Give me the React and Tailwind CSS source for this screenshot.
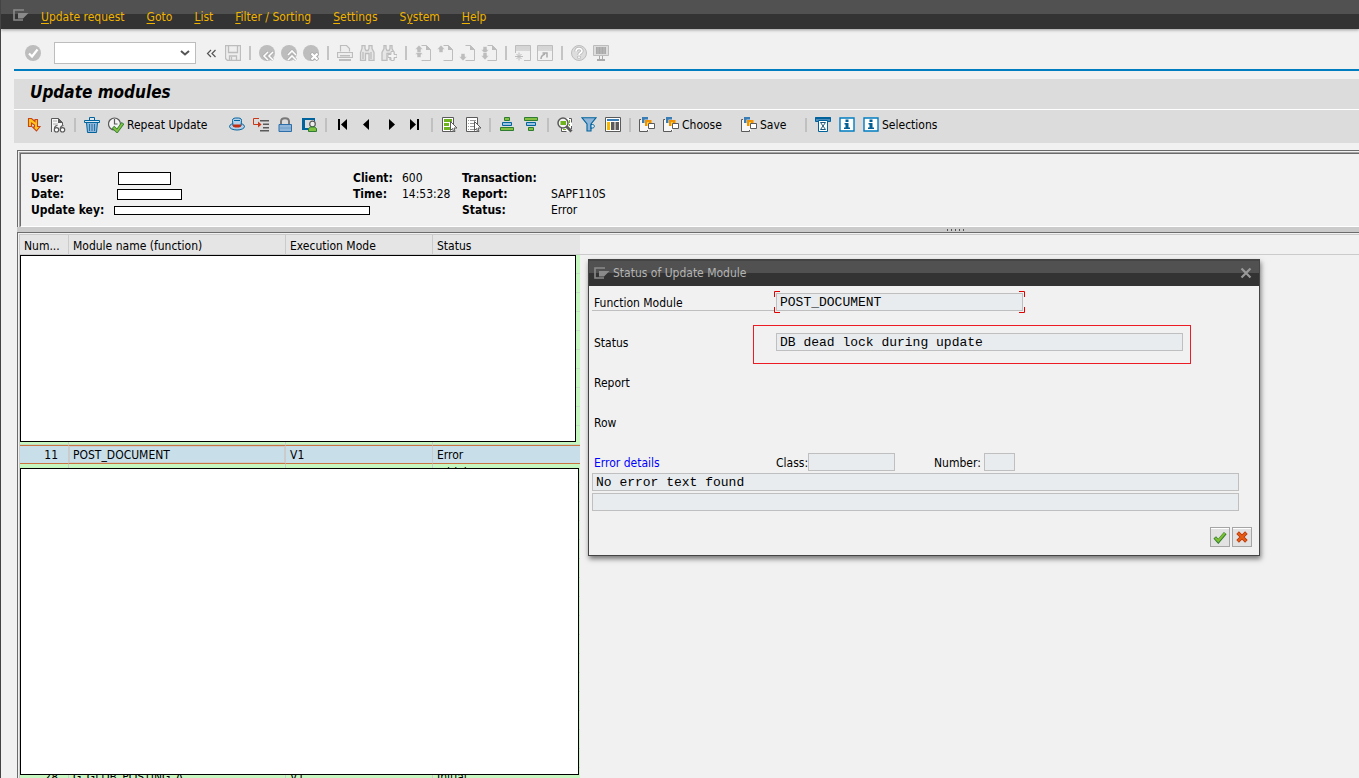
import { useState } from 'react'
import clsx from 'clsx'

const MENU = [
  ['', 'U', 'pdate request'],
  ['', 'G', 'oto'],
  ['', 'L', 'ist'],
  ['', 'F', 'ilter / Sorting'],
  ['', 'S', 'ettings'],
  ['S', 'y', 'stem'],
  ['', 'H', 'elp'],
]

const G = '#bdbdbd'
const DARK = '#5a5a5a'
const BLUE = '#00639c'
const LIGHT_BLUE = '#8fb5d9'
const GREEN = '#6fb21f'
const DARK_GREEN = '#2f7d32'

const page = (
  <>
    <path d="M6.500.5h5l4 4v11h-9" fill="none" stroke={G} />
    <path d="M11 0v5h5z" fill={G} />
  </>
)
const upArrow = (y) => <path d={`M4 ${y}l4 4.500h-2v3h-4v-3h-2z`} fill={G} stroke="#f1f1f1" strokeWidth=".6" />
const downArrow = (y) => <path d={`M4 ${y}l4-4.500h-2v-3h-4v3h-2z`} fill={G} stroke="#f1f1f1" strokeWidth=".6" />

const ICONS = {
  enter: (
    <>
      <circle cx="8" cy="8" r="8" fill={G} />
      <path d="M4 8.500l3 3 5.500-7" fill="none" stroke="#fff" strokeWidth="2.200" />
    </>
  ),
  collapse: <path d="M8 5l-3.500 3.500L8 12M12.500 5L9 8.500l3.500 3.500" fill="none" stroke="#555" strokeWidth="1.200" />,
  disk: (
    <>
      <path d="M.5.5h15v15H2.500l-2-2z" fill="#eee" stroke={G} strokeWidth="1.300" />
      <path d="M3.500.5v7h9v-7M4.500 15v-4h7v4M6.500 12v3" fill="none" stroke={G} strokeWidth="1.300" />
    </>
  ),
  back: (
    <>
      <circle cx="8" cy="8" r="8" fill={G} />
      <path d="M9 7l-4 4 4 4M14 7l-4 4 4 4" fill="none" stroke="#aaa" strokeWidth="2.800" />
      <path d="M9 7l-4 4 4 4M14 7l-4 4 4 4" fill="none" stroke="#fff" strokeWidth="1.600" />
    </>
  ),
  exit: (
    <>
      <circle cx="8" cy="8" r="8" fill={G} />
      <path d="M7 10l4-4 4 4M7 15l4-4 4 4" fill="none" stroke="#aaa" strokeWidth="2.800" />
      <path d="M7 10l4-4 4 4M7 15l4-4 4 4" fill="none" stroke="#fff" strokeWidth="1.600" />
    </>
  ),
  cancel: (
    <>
      <circle cx="8" cy="8" r="8" fill={G} />
      <path d="M8 8l7 7M15 8l-7 7" stroke="#aaa" strokeWidth="3.800" />
      <path d="M8.500 8.500l6 6M14.500 8.500l-6 6" stroke="#fff" strokeWidth="2.200" />
    </>
  ),
  print: (
    <>
      <path d="M3.500 6.500v-6h6l3 3v3" fill="#eee" stroke={G} strokeWidth="1.200" />
      <path d="M.5 7.500h15v5H.5z" fill="#eee" stroke={G} strokeWidth="1.200" />
      <path d="M3 10h10v1.500H3zM2 14h12v2H2z" fill={G} />
    </>
  ),
  find: (
    <path d="M3 .5h3v3l1 2h2l1-2v-3h3v3l2 4v8H10v-7H6.500v7H1.500v-8l1.500-4zM4 7v7M12 7v7" fill="#e6e6e6" stroke={G} strokeWidth="1.300" />
  ),
  findNext: (
    <>
      <path d="M3 .5h2v3l1 2h2l1-2v-3h2v3l2 4v7H9v-6H6v7H1v-8l2-4z" fill="#e6e6e6" stroke={G} strokeWidth="1.300" />
      <path d="M10 6.500h3v3h3v3h-3v3h-3v-3H7v-3h3z" fill="#f4f4f4" stroke={G} />
    </>
  ),
  firstPage: <>{page}{upArrow(5)}{upArrow(0)}</>,
  prevPage: <>{page}{upArrow(0)}</>,
  nextPage: <>{page}{downArrow(16)}</>,
  lastPage: <>{page}{downArrow(9)}{downArrow(15)}</>,
  newSession: (
    <>
      <path d="M.5 8V.5h15v15H9" fill="none" stroke={G} />
      <path d="M1 1h14v3H1z" fill="#d5d5d5" />
      <path d="M.5 5h15M4 7.500v8M0 11.500h8M1.500 9l5 5M6.500 9l-5 5" stroke={G} />
    </>
  ),
  shortcut: (
    <>
      <path d="M.5.5h15v15H.5z" fill="none" stroke={G} />
      <path d="M1 1h14v3H1z" fill="#d5d5d5" />
      <path d="M.5 5h15" stroke={G} />
      <path d="M4 14c0-3 1-4 4-5M5.500 8H10v4.500" fill="none" stroke="#aaa" strokeWidth="1.500" />
    </>
  ),
  help: (
    <>
      <circle cx="8" cy="8" r="7.500" fill="#ddd" stroke={G} />
      <path d="M5 6.500c0-4 6-4 6-.5 0 2-3 2-3 4M8 11v2.500" fill="none" stroke={G} strokeWidth="3.400" />
      <path d="M5 6.500c0-4 6-4 6-.5 0 2-3 2-3 4M8 11.500v1.500" fill="none" stroke="#fff" strokeWidth="1.600" />
    </>
  ),
  monitor: (
    <>
      <path d="M.5.5h15v10H.5z" fill="#ddd" stroke={G} />
      <path d="M3 2h10v7H3z" fill="#aaa" />
      <path d="M4.500 2h1v7h-1zM7.500 2h1v7h-1zM10.500 2h1v7h-1z" fill="#bbb" />
      <path d="M6 11h1v3h2v-3h1v3h2v2H4v-2h2z" fill="#aaa" />
    </>
  ),
  lightning: (
    <path d="M2.500 1.500h3L9 4.500V2.500h2.500v7h2.500L10.500 14 6.500 10h2V8L5.500 6v3.500h-3z" fill="#ffc61a" stroke="#c8451b" strokeWidth="1.100" />
  ),
  glasses: (
    <>
      <path d="M1.500 15V1.500h7l4 4V8" fill="#f7f7f7" stroke={DARK} />
      <path d="M8 1v5h5z" fill={DARK} />
      <path d="M3 4h4M3 7h5" stroke="#aaa" />
      <g fill="#fff" stroke={DARK} strokeWidth="1.200">
        <path d="M4.500 12c0-3 1-3.500 3-3.500M10.500 12c0-3 1-3.500 3-3.500" fill="none" />
        <circle cx="6.500" cy="12.800" r="2.200" />
        <circle cx="12.500" cy="12.800" r="2.200" />
      </g>
    </>
  ),
  trash: (
    <>
      <path d="M2.500 5.500h11l-1 10h-9z" fill={LIGHT_BLUE} stroke={BLUE} />
      <path d="M.5 3.500h15v2H.5zM5.500 3.500v-3h5v3" fill="#dce9f3" stroke={BLUE} />
      <path d="M5.500 7v7M8 7v7M10.500 7v7" stroke={BLUE} strokeWidth=".8" />
    </>
  ),
  clock: (
    <>
      <circle cx="6.500" cy="7" r="6" fill="#f4f4f4" stroke={DARK} strokeWidth="1.200" />
      <path d="M6.500 2v5h3" fill="none" stroke={DARK} strokeWidth="1.200" />
      <path d="M5 10l4 4 6-8" fill="none" stroke={DARK_GREEN} strokeWidth="3.400" />
      <path d="M5.500 10.500l3.500 3.500 5.500-7.500" fill="none" stroke="#84c341" strokeWidth="1.800" />
    </>
  ),
  hat: (
    <>
      <ellipse cx="8" cy="9.500" rx="7.500" ry="3.500" fill="#b5d0e8" stroke={BLUE} />
      <path d="M4 9L3.500 3.500c0-2.500 2-2.500 4.500-2.500s4.500 0 4.500 2.500L12 9z" fill="#b5d0e8" stroke={BLUE} />
      <path d="M5 3.500h6" stroke={BLUE} />
      <path d="M4 7.500h8v2l-2 1H6l-2-1z" fill="#c22d12" />
    </>
  ),
  indent: (
    <>
      <path d="M6 1.500H.5v6H6" fill="none" stroke="#c8381a" />
      <path d="M5 4.500L8.500 7.500 5 10.500z" fill="#c8381a" />
      <path d="M7 3h9v1.500H7zM10 6.500h6V8h-6zM10 10h6v1.500h-6zM7 13h9v1.500H7z" fill={DARK} />
    </>
  ),
  lock: (
    <>
      <path d="M4 8V4.500C4 0 12 0 12 4.500V8" fill="none" stroke="#777" strokeWidth="2" />
      <path d="M2 7.500h12.500v7H2z" fill={LIGHT_BLUE} stroke="#2d6fa8" />
      <path d="M2.500 11h11.500" stroke="#6c9dc9" />
    </>
  ),
  owner: (
    <>
      <path d="M14 1v3h-1V3H4v8h4v2H1V1z" fill={BLUE} />
      <circle cx="11.500" cy="7" r="2.800" fill="#eee" stroke={DARK} strokeWidth="1.200" />
      <path d="M7.500 14.500v-3l2-1.500h4l2 1.500v3z" fill="#7fc241" stroke={DARK_GREEN} />
    </>
  ),
  first: <path d="M3 2h2v11H3zM12 2v11L6 7.500z" fill="#000" />,
  prev: <path d="M10 2v11L4 7.500z" fill="#000" />,
  next: <path d="M6 2v11l6-5.500z" fill="#000" />,
  last: <path d="M3 2v11l6-5.500zM10 2h2v11h-2z" fill="#000" />,
  selectAll: (
    <>
      <path d="M1.500.5h11v14h-11z" fill="#fff" stroke={DARK} />
      <path d="M3 2h8v3H3zM3 6h5v3H3zM3 10h6v3H3z" fill={GREEN} />
      <path d="M9.500 4.500v9l2-2 1 3h1.500l-1-3.500h3z" fill="#fff" stroke={DARK} />
    </>
  ),
  deselectAll: (
    <>
      <path d="M1.500.5h11v14h-11z" fill="#fff" stroke={DARK} />
      <path d="M3 3.500h1M5 3.500h6M3 6.500h1M5 6.500h4M3 9.500h1M5 9.500h4M3 12.500h1M5 12.500h4" stroke="#999" />
      <path d="M9.500 4.500v9l2-2 1 3h1.500l-1-3.500h3z" fill="#fff" stroke={DARK} />
    </>
  ),
  sortAsc: (
    <>
      <path d="M5.500.5h5v3h-5z" fill="#84bf41" stroke={DARK_GREEN} />
      <path d="M3.500 5.500h9v3h-9z" fill="#9cc3e0" stroke={BLUE} />
      <path d="M1.500 10.500h13v3h-13z" fill="#84bf41" stroke={DARK_GREEN} />
    </>
  ),
  sortDesc: (
    <>
      <path d="M1.500.5h13v3h-13z" fill="#84bf41" stroke={DARK_GREEN} />
      <path d="M3.500 5.500h9v3h-9z" fill="#9cc3e0" stroke={BLUE} />
      <path d="M5.500 10.500h5v3h-5z" fill="#84bf41" stroke={DARK_GREEN} />
    </>
  ),
  search: (
    <>
      <path d="M9 1h6v13.500H4V10" fill="#fff" />
      <path d="M12 1.500h2.500v4M4.500 11v3.500h5M14.500 9v3" fill="none" stroke={DARK} />
      <path d="M12 3h1v3h-1zM12 7h1v2h-1zM6 12h3v1H6z" fill={GREEN} />
      <circle cx="6" cy="6" r="5" fill="#f4f4f4" stroke={DARK} strokeWidth="1.500" />
      <path d="M3.500 4H9v4H3.500z" fill={GREEN} />
      <path d="M9.500 9.500l5 5" stroke={DARK} strokeWidth="3" />
    </>
  ),
  filter: (
    <>
      <path d="M1 .8h14L10 7v7H6V7z" fill={LIGHT_BLUE} stroke={BLUE} strokeWidth="1.100" />
      <path d="M10 12V7.500h1.500c2.500 0 2.500 3.500 0 3.500H10" fill="#dce9f3" stroke={BLUE} />
    </>
  ),
  layout: (
    <>
      <path d="M.5.5h15v14H.5z" fill="#fff" stroke={DARK} />
      <path d="M2 2h12v2H2z" fill="#3a7db5" />
      <path d="M2 5h3v8H2z" fill="#f9b800" />
      <path d="M6 5h3.500v8H6zM10.500 5H14v8h-3.500z" fill={DARK} />
    </>
  ),
  stack: (
    <>
      <path d="M1 3h9v11H1z" fill="#f7f7f7" />
      <path d="M2 2.500H.5v12h8v-1.500" fill="none" stroke={DARK} />
      <path d="M3 0h6v2.500H5.500V6H3z" fill="#3a7db5" />
      <path d="M6 3h6.500v3H9.500v3H6z" fill="#f39200" />
      <path d="M8 5h2v1H9v3H8z" fill="#ffd14d" />
      <path d="M9.500 6.500h6v5h-6z" fill="#fff" stroke={DARK} />
    </>
  ),
  hourglass: (
    <>
      <path d="M.5.5h15v4h-15z" fill="#4d8dbb" stroke={BLUE} />
      <path d="M3.500 3.500h9v11h-9z" fill="#fff" stroke={BLUE} />
      <path d="M5.500 5.500h5l-5 7h5z" fill="none" stroke="#1f5679" />
      <path d="M.5 1h15" stroke={BLUE} strokeWidth="2" />
    </>
  ),
  info: (
    <>
      <path d="M1 1h14v13H1z" fill="#fff" stroke="#007cc0" strokeWidth="1.400" />
      <path d="M6.500 2.500h3V5h-3zM5.500 6h4v4.500H11V12H5v-1.500h1.500v-3h-1z" fill="#005f94" />
    </>
  ),
  check: (
    <>
      <path d="M2 8.500L6 13l8-9.500" fill="none" stroke={DARK_GREEN} strokeWidth="4" />
      <path d="M2.500 9L6 12.500l7.500-9" fill="none" stroke="#7fc031" strokeWidth="2.400" />
    </>
  ),
  cross: (
    <>
      <path d="M3 3l10 10M13 3L3 13" fill="none" stroke="#b5370d" strokeWidth="4.200" />
      <path d="M3.500 3.500l9 9M12.500 3.500l-9 9" fill="none" stroke="#e65c12" strokeWidth="2.600" />
    </>
  ),
}

// null = separator
const STANDARD_BAR = [
  'collapse', 'disk', null,
  'back', 'exit', 'cancel', null,
  'print', 'find', 'findNext', null,
  'firstPage', 'prevPage', 'nextPage', 'lastPage', null,
  'newSession', 'shortcut', null,
  'help', 'monitor',
]

const APP_BAR = [
  { icon: 'lightning' }, { icon: 'glasses' }, null,
  { icon: 'trash' }, { icon: 'clock', text: 'Repeat Update', cls: 'w-[121px]' },
  { icon: 'hat' }, { icon: 'indent' }, { icon: 'lock' }, { icon: 'owner' }, null,
  { icon: 'first' }, { icon: 'prev' }, { icon: 'next' }, { icon: 'last' }, null,
  { icon: 'selectAll' }, { icon: 'deselectAll' }, null,
  { icon: 'sortAsc' }, { icon: 'sortDesc' }, null,
  { icon: 'search' }, { icon: 'filter' }, { icon: 'layout' }, null,
  { icon: 'stack' }, { icon: 'stack', text: 'Choose', cls: 'w-[78px]' },
  { icon: 'stack', text: 'Save', cls: 'w-16' }, null,
  { icon: 'hourglass' }, { icon: 'info' }, { icon: 'info', text: 'Selections', cls: 'w-[90px]' },
]

const ROWS = Array.from({ length: 29 }, (_, i) => {
  const num = i + 1
  if (num === 11) return { num, name: 'POST_DOCUMENT', mode: 'V1', status: 'Error' }
  if (num === 12 || num === 28) return { num, name: 'G_GLDB_POSTING_A', mode: 'V1', status: 'Initial' }
  return { num: '', name: '', mode: '', status: '' }
})

const fieldCls =
  'h-[18px] border border-[#bfbfbf] bg-[#e8ecef] px-[3px] font-["Liberation_Mono",monospace] text-[13px] leading-4 text-black outline-none'

function Icon({ name }) {
  return <svg viewBox="0 0 16 16" className="size-4 shrink-0">{ICONS[name]}</svg>
}

function WindowMark() {
  return (
    <svg viewBox="0 0 16 12" className="h-3 w-4 shrink-0">
      <path d="M11 1H1v10h9" fill="none" stroke="#8a8a8a" strokeWidth="1.600" />
      <path d="M5 4h10.500L10 9.500H5z" fill="#8a8a8a" />
    </svg>
  )
}

function MenuBar() {
  return (
    <nav className="flex h-[29px] items-center bg-linear-to-b from-[#515151] from-48% to-[#333] to-48% pl-3 pt-1 text-[#f0b400] shadow-[0_1px_3px_#999]">
      <span className="mb-1 mr-3"><WindowMark /></span>
      <div className="flex gap-[22px]">
        {MENU.map(([pre, key, rest]) => (
          <button key={pre + key + rest} type="button" className="leading-4">
            {pre}<span className="underline underline-offset-2">{key}</span>{rest}
          </button>
        ))}
      </div>
    </nav>
  )
}

function StandardBar() {
  const [command, setCommand] = useState('')
  return (
    <div className="ml-[13px] flex h-[42px] items-center border-b-2 border-[#007cc0] pl-2 pt-2">
      <button type="button" aria-label="Enter" className="flex w-[22px] justify-center"><Icon name="enter" /></button>
      <div className="relative ml-[10px] mr-1">
        <select
          aria-label="Command" value={command} onChange={(e) => setCommand(e.target.value)}
          className="block h-[22px] w-[142px] appearance-none border border-[#bdbdbd] bg-white px-1"
        >
          <option value="" />
        </select>
        <svg viewBox="0 0 10 6" className="pointer-events-none absolute right-[6px] top-2 h-[6px] w-[10px]">
          <path d="M1 1l4 3.500L9 1" fill="none" stroke="#555" strokeWidth="2" />
        </svg>
      </div>
      {STANDARD_BAR.map((name, i) =>
        name ? (
          <button key={i} type="button" aria-label={name} className="flex w-[22px] justify-center"><Icon name={name} /></button>
        ) : (
          <span key={i} className="flex w-3 justify-center"><span className="h-[14px] w-[2px] bg-[#c4c4c4]" /></span>
        )
      )}
    </div>
  )
}

function AppBar() {
  return (
    <div className="ml-[13px] flex h-[34px] items-center border-t border-white bg-[#dcdcdc] pb-1 pl-2">
      {APP_BAR.map((item, i) =>
        item ? (
          <button key={i} type="button" aria-label={item.text ?? item.icon}
            className={clsx('flex shrink-0 items-center gap-[3px] whitespace-nowrap pl-1', item.cls ?? 'w-6')}>
            <Icon name={item.icon} />
            {item.text}
          </button>
        ) : (
          <span key={i} className="flex w-[10px] shrink-0 justify-center"><span className="h-[14px] w-[2px] bg-[#c0c0c0]" /></span>
        )
      )}
    </div>
  )
}

function UpdateHeader() {
  return (
    <section className="ml-4 mt-[7px] border-l border-t border-[#6b6b6b] pl-px pt-px">
      <div className="border-l border-t border-[#a5a5a5]">
        <div className="grid h-[74px] grid-cols-[322px_49px_60px_89px_1fr] content-start border-b border-l border-t border-b-white border-l-[#6b6b6b] border-t-[#6b6b6b] pl-[10px] pt-4 leading-4">
          <div className="flex items-center">
            <b className="w-[83px]">User:</b>
            <span className="ml-1 h-[13px] w-[53px] border border-black bg-white" />
          </div>
          <b>Client:</b><span>600</span><b>Transaction:</b><span />
          <div className="flex items-center">
            <b className="w-[83px]">Date:</b>
            <span className="ml-[3px] h-[11px] w-[65px] border border-black bg-white" />
          </div>
          <b>Time:</b><span>14:53:28</span><b>Report:</b><span>SAPF110S</span>
          <div className="flex items-center">
            <b className="w-[83px] shrink-0 whitespace-nowrap">Update key:</b>
            <span className="h-[9px] w-[256px] shrink-0 border border-black bg-white" />
          </div>
          <span /><span /><b>Status:</b><span>Error</span>
        </div>
      </div>
    </section>
  )
}

function ModuleTable() {
  return (
    <section className="ml-4 flex min-h-0 flex-1 border-l border-t border-[#6b6b6b] pl-px pt-px">
      <div className="relative flex-1 overflow-hidden border-l border-t border-[#cbcbcb]">
        <div className="absolute inset-x-0 top-[19px] h-px bg-[#cbcbcb]" />
        <table className="relative w-[560px] table-fixed border-separate border-spacing-0">
          <colgroup>
            <col className="w-[49px]" /><col className="w-[217px]" /><col className="w-[147px]" /><col className="w-[147px]" />
          </colgroup>
          <thead>
            <tr className="h-5 bg-[#e5e5e5] text-left">
              {['Num...', 'Module name (function)', 'Execution Mode', 'Status'].map((h, i) => (
                <th key={h} scope="col"
                  className={clsx('whitespace-nowrap border-b border-[#cbcbcb] p-0 pl-1 pt-[2px] font-normal leading-4', i < 3 && 'border-r')}>
                  {h}
                </th>
              ))}
            </tr>
          </thead>
          <tbody>
            {ROWS.map((row, i) => {
              const selected = row.num === 11
              return (
                <tr key={i} className={clsx('h-[19px]', selected ? 'bg-[#c8dfea]' : 'bg-[#c6f7c1]')}>
                  {[row.num, row.name, row.mode, row.status].map((value, c) => (
                    <td key={c}
                      className={clsx(
                        'whitespace-nowrap border-b p-0 leading-4',
                        selected ? 'border-t border-y-[#c87340]' : 'border-b-[#c4dcc2]',
                        c < 3 && 'border-r border-r-[#cbcbcb]',
                        c === 0 ? 'pr-[10px] text-right' : 'pl-1',
                        selected && c === 1 && 'shadow-[inset_0_0_0_1px_#ccc]'
                      )}>
                      {value}
                    </td>
                  ))}
                </tr>
              )
            })}
          </tbody>
        </table>
        {/* blanked out rows */}
        <div className="absolute left-0 top-5 h-[187px] w-[556px] border border-black bg-white" />
        <div className="absolute left-0 top-[233px] h-[307px] w-[559px] border border-black bg-white" />
      </div>
    </section>
  )
}

function StatusDialog() {
  return (
    <div role="dialog" aria-labelledby="dialog-title"
      className="absolute left-[587px] top-[259px] w-[672px] border-x border-b border-t-2 border-[#444] bg-[#f1f1f1] shadow-[1px_3px_5px_#777]">
      <header className="flex h-[25px] items-center justify-between bg-linear-to-b from-[#515151] from-48% to-[#333] to-48% pb-[2px] pl-[5px] pr-[7px] text-[#b4b4b4]">
        <div className="flex items-center gap-[3px]">
          <WindowMark />
          <h2 id="dialog-title" className="leading-4">Status of Update Module</h2>
        </div>
        <button type="button" aria-label="Close">
          <svg viewBox="0 0 12 12" className="size-3"><path d="M1.500 1.500l9 9M10.500 1.500l-9 9" stroke="#999" strokeWidth="2.200" /></svg>
        </button>
      </header>
      <form className="flex flex-col gap-[2px] pb-2 pl-[3px] pr-[7px] pt-[7px] leading-4" onSubmit={(e) => e.preventDefault()}>
        <div className="flex">
          <label htmlFor="fm" className="mr-[2px] h-[18px] w-[182px] border-b border-[#bfbfbf] pl-[2px] pt-[2px]">Function Module</label>
          <div className="relative">
            <input id="fm" readOnly value="POST_DOCUMENT" className={clsx(fieldCls, 'block w-[247px]')} />
            <svg viewBox="0 0 251 22" className="pointer-events-none absolute -left-[2px] -top-[2px] h-[22px] w-[251px]">
              <path d="M6 .5H.5V6M.5 16v5.500H6M245 .5h5.500V6M250.500 16v5.500H245" fill="none" stroke="#e00000" />
            </svg>
          </div>
        </div>
        <div className="mt-5 flex">
          <label htmlFor="st" className="w-[184px] pl-[2px] pt-[2px]">Status</label>
          <div className="relative">
            <input id="st" readOnly value="DB dead lock during update" className={clsx(fieldCls, 'block w-[407px]')} />
            <div className="pointer-events-none absolute -left-[23px] -top-2 h-[39px] w-[438px] border border-[#ed1c24]" />
          </div>
        </div>
        <p className="mt-5 h-[18px] pl-[2px] pt-[2px]">Report</p>
        <p className="mt-5 h-[18px] pl-[2px] pt-[2px]">Row</p>
        <div className="mt-5 flex h-[18px]">
          <span className="w-[184px] pl-[2px] pt-[2px] text-[#0000ff]">Error details</span>
          <label htmlFor="cls" className="w-8 pt-[2px]">Class:</label>
          <input id="cls" readOnly value="" className={clsx(fieldCls, 'w-[87px]')} />
          <label htmlFor="nr" className="ml-[39px] w-[50px] pt-[2px]">Number:</label>
          <input id="nr" readOnly value="" className={clsx(fieldCls, 'w-[31px]')} />
        </div>
        <input aria-label="Error text" readOnly value="No error text found" className={clsx(fieldCls, 'w-[647px]')} />
        <input aria-label="Error text, line 2" readOnly value="" className={clsx(fieldCls, 'w-[647px]')} />
        <div className="mt-[14px] flex justify-end gap-[2px]">
          {['check', 'cross'].map((name) => (
            <button key={name} type="button" aria-label={name}
              className="flex size-5 items-center justify-center border border-[#a5a5a5] bg-[#e2e2e2] shadow-[inset_0_1px_0_#fff]">
              <svg viewBox="0 0 16 16" className="size-[14px]">{ICONS[name]}</svg>
            </button>
          ))}
        </div>
      </form>
    </div>
  )
}

export default function App() {
  return (
    <main className='relative flex h-screen flex-col overflow-hidden border-l border-[#444] bg-[#f1f1f1] font-["DejaVu_Sans_Condensed","DejaVu_Sans",sans-serif] text-[12px] text-black'>
      <MenuBar />
      <StandardBar />
      <h1 className="ml-[13px] mt-2 h-[30px] bg-[#dcdcdc] pl-4 pt-[3px] text-[17px] font-bold italic leading-5">Update modules</h1>
      <AppBar />
      <UpdateHeader />
      <div className="ml-4 flex h-[5px] justify-center bg-[#cbcbcb]">
        <svg viewBox="0 0 20 2" className="mt-[2px] h-[2px] w-5 translate-x-[268px]">
          <path d="M1 1h1M5 1h1M9 1h1M13 1h1M17 1h1" stroke="#555" strokeWidth="2" />
        </svg>
      </div>
      <ModuleTable />
      <StatusDialog />
    </main>
  )
}
